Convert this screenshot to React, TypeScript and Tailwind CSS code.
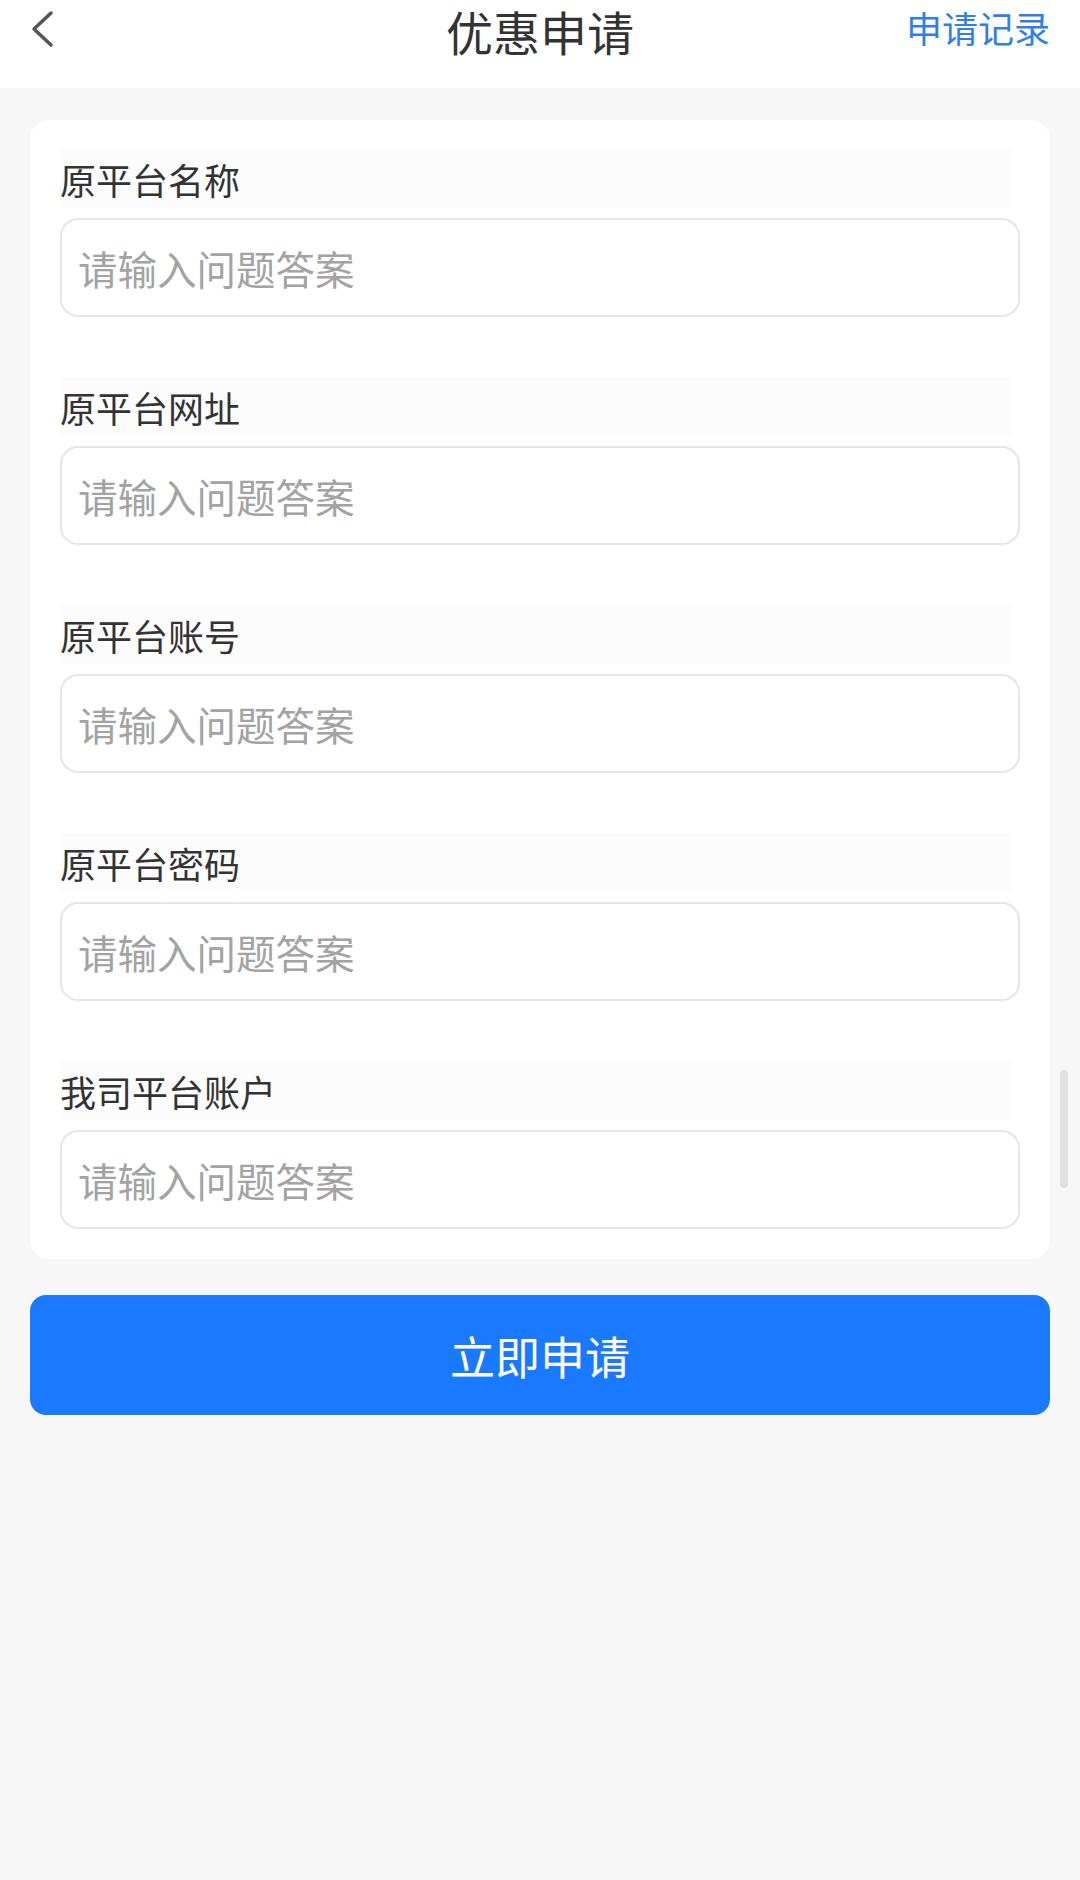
import React from "react";

const fields = ["原平台名称", "原平台网址", "原平台账号", "原平台密码", "我司平台账户"];

export default function App() {
  const font = { fontFamily: '"Noto Sans CJK SC", "Noto Sans", sans-serif' };
  return (
    <div className="relative w-[1080px] h-[1880px] bg-[#f7f7f7] overflow-hidden" style={font}>
      <div className="relative h-[88px] bg-white flex items-start">
        <div className="absolute left-[28px] top-[10px]">
          <svg width="28" height="38" viewBox="0 0 28 38">
            <path d="M23 3 L6 19 L23 35" fill="none" stroke="#555" strokeWidth="3.5" strokeLinecap="round" strokeLinejoin="round" />
          </svg>
        </div>
        <div className="w-full text-center text-[47px] leading-none pt-[7px] text-[#333]">优惠申请</div>
        <div className="absolute right-[30px] top-[9px] text-[36px] leading-none text-[#2f7fe6]">申请记录</div>
      </div>
      <div className="mx-[30px] mt-[32px] bg-white rounded-[20px] px-[30px] pt-[29px] pb-[30px] flex flex-col gap-[60px]">
        {fields.map((f) => (
          <div key={f} className="flex flex-col gap-[10px]">
            <div className="h-[59px] bg-[#fcfcfc] mr-[8px] flex items-center text-[36px] text-[#333] leading-none">{f}</div>
            <div className="h-[99px] rounded-[18px] border-2 border-[#e6e6e6] flex items-center pl-[16px] text-[39.5px] text-[#a3a3a3] leading-none">
              请输入问题答案
            </div>
          </div>
        ))}
      </div>
      <div className="mx-[30px] mt-[36px] h-[120px] rounded-[16px] bg-[#1a7aff] flex items-center justify-center text-white text-[45px] leading-none">
        立即申请
      </div>
      <div className="absolute left-[1060px] top-[1070px] w-[8px] h-[118px] rounded-full bg-[#e0e0e0]" />
    </div>
  );
}
